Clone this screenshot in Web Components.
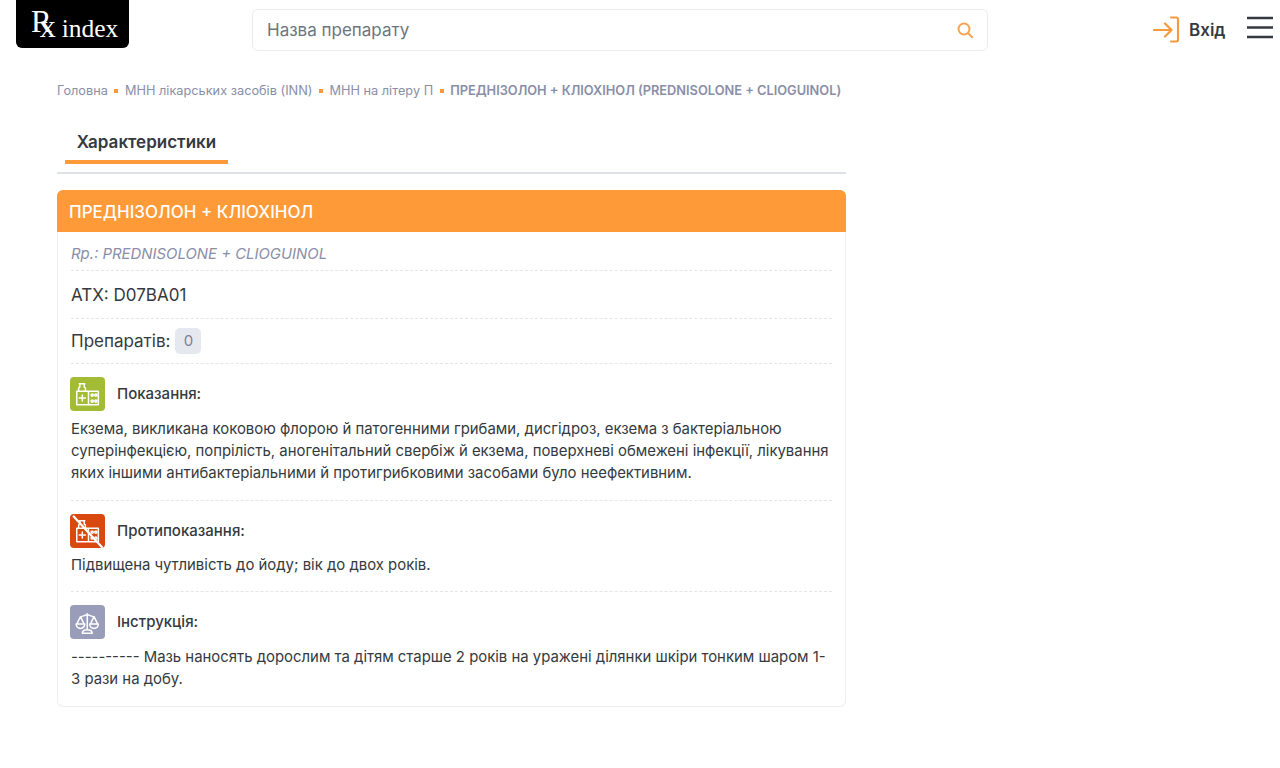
<!DOCTYPE html>
<html lang="uk">
<head>
<meta charset="utf-8">
<title>Rx index</title>
<style>
    html, body { margin: 0; background: #fff; }
    body { font-family: Inter, "Noto Sans", sans-serif; color: #212529; }
</style>
</head>
<body>
<site-header></site-header>
<page-content>
    <bread-crumbs></bread-crumbs>
    <tab-bar></tab-bar>
    <drug-card title-text="ПРЕДНІЗОЛОН + КЛІОХІНОЛ">
        <card-row kind="latin"><i>Rp.: PREDNISOLONE + CLIOGUINOL</i></card-row>
        <card-row kind="atc"><span>АТХ: D07BA01</span></card-row>
        <card-row kind="count"><span>Препаратів:</span> <count-badge>0</count-badge></card-row>
        <info-block label="Показання:" kind="ok">Екзема, викликана коковою флорою й патогенними грибами, дисгідроз, екзема з бактеріальною суперінфекцією, попрілість, аногенітальний свербіж й екзема, поверхневі обмежені інфекції, лікування яких іншими антибактеріальними й протигрибковими засобами було неефективним.</info-block>
        <info-block label="Протипоказання:" kind="no">Підвищена чутливість до йоду; вік до двох років.</info-block>
        <info-block label="Інструкція:" kind="law" last>---------- Мазь наносять дорослим та дітям старше 2 років на уражені ділянки шкіри тонким шаром 1-3 рази на добу.</info-block>
    </drug-card>
</page-content>

<script>
const kit = `<path d="M5.500 11.500h17.500v11H5.500zM7 11.500V9l1-1V5.500h3.500V8l1 1v2.500M7.500 5.500h4.500M15 11.500v11M7.500 17h5M10 14.500v5"/><circle cx="18" cy="14.700" r=".9"/><circle cx="21" cy="14.700" r=".9"/><circle cx="18" cy="19.500" r=".9"/><circle cx="21" cy="19.500" r=".9"/>`

const icons = {
    ok: { bg: '#a3bc36', svg: kit },
    no: { bg: '#d9480f', svg: kit + `<path stroke-width="1.800" d="M3 2l23 25"/>` },
    law: { bg: '#9a9db9', svg: `<path d="M14 7v13M8.500 9.500c2.500 0 3.500-1.500 5.500-1.500s3 1.500 5.500 1.500M8.500 9.500L5.500 15.500M8.500 9.500L11.500 15.500M19.500 9.500L16.500 15.500M19.500 9.500L22.500 15.500M5 15.500a3.500 3.500 0 0 0 7 0zM16 15.500a3.500 3.500 0 0 0 7 0zM10 23c0-2 1.500-3 4-3s4 1 4 3z"/>` }
}

window.customElements.define('site-header', class extends HTMLElement {
    constructor() {
        super()
        this.attachShadow({ mode: 'open' }).innerHTML = `
            <style>
                :host { display: flex; align-items: flex-start; height: 68px; }
                .logo {
                    display: flex; align-items: baseline;
                    width: 113px; height: 48px; margin-left: 16px; box-sizing: border-box;
                    background: #000; color: #fff; border-radius: 0 0 6px 6px;
                    font-family: "Liberation Serif", serif; white-space: nowrap;
                    padding: 4px 0 0 15px; line-height: 36px;
                }
                .rx { font-size: 32px; }
                .rx::first-letter { font-size: 31px; vertical-align: 5px; margin-right: -12px; }
                .name { font-size: 25.500px; margin-left: 6px; }
                .search {
                    width: 736px; height: 42px; margin: 9px 0 0 123px; box-sizing: border-box;
                    border: 1px solid #e9ecef; border-radius: 6px; padding: 0 13px 0 14px;
                    display: flex; align-items: center; justify-content: space-between;
                    color: #6c757d; font-size: 17px;
                }
                .login {
                    display: flex; align-items: center; margin: 16px 0 0 165px;
                    font-size: 17px; font-weight: 600; color: #343a40;
                }
                .login svg { margin-right: 9px; }
                .burger { margin: 16px 0 0 22px; }
            </style>
            <div class="logo"><div class="rx">Rx</div><div class="name">index</div></div>
            <div class="search">
                <span>Назва препарату</span>
                <svg width="18" height="18" viewBox="0 0 18 18" fill="none" stroke="#f7a351" stroke-width="2" stroke-linecap="round"><circle cx="8" cy="8" r="5.500"/><path d="M12.200 12.200l4 4"/></svg>
            </div>
            <div class="login">
                <svg width="27" height="27" viewBox="0 0 27 27" fill="none" stroke="#f79a3e" stroke-width="2.200" stroke-linecap="round" stroke-linejoin="round"><path d="M1 14h17M12 7.500l6.500 6.500-6.500 6.500M18 1.500h5.500a1.500 1.500 0 0 1 1.500 1.500v21a1.500 1.500 0 0 1-1.500 1.500h-5.500"/></svg>
                <span>Вхід</span>
            </div>
            <svg class="burger" width="26" height="23" viewBox="0 0 26 23" fill="none" stroke="#343a40" stroke-width="2.400"><path d="M0 2h26M0 11.500h26M0 21h26"/></svg>
        `
    }
})

window.customElements.define('page-content', class extends HTMLElement {
    constructor() {
        super()
        this.attachShadow({ mode: 'open' }).innerHTML = `
            <style>
                :host { display: block; width: 789px; margin-left: 57px; }
            </style>
            <slot></slot>
        `
    }
})

window.customElements.define('bread-crumbs', class extends HTMLElement {
    constructor() {
        super()
        this.attachShadow({ mode: 'open' }).innerHTML = `
            <style>
                :host {
                    display: flex; align-items: center; height: 44px; white-space: nowrap;
                    font-size: 12.750px; color: #8a8ea8; margin-bottom: 2px;
                }
                i { width: 4px; height: 4px; background: #f79a3e; margin: 2px 6.500px 0; }
                b { font-weight: 600; font-size: 12.800px; }
            </style>
            <span>Головна</span><i></i>
            <span>МНН лікарських засобів (INN)</span><i></i>
            <span>МНН на літеру П</span><i></i>
            <b>ПРЕДНІЗОЛОН + КЛІОХІНОЛ (PREDNISOLONE + CLIOGUINOL)</b>
        `
    }
})

window.customElements.define('tab-bar', class extends HTMLElement {
    constructor() {
        super()
        this.attachShadow({ mode: 'open' }).innerHTML = `
            <style>
                :host { display: block; border-bottom: 2px solid #dee2e6; height: 58px; margin-bottom: 16px; }
                div {
                    margin-left: 8px; width: 163px; height: 50px; box-sizing: border-box; padding-top: 17px;
                    border-bottom: 4px solid #ff9a39; text-align: center;
                    font-size: 17px; font-weight: 600; color: #343a40; line-height: 22px;
                }
            </style>
            <div>Характеристики</div>
        `
    }
})

window.customElements.define('drug-card', class extends HTMLElement {
    constructor() {
        super()
        this.attachShadow({ mode: 'open' }).innerHTML = `
            <style>
                :host { display: block; border-radius: 6px; box-shadow: 0 0 0 1px #eceef1 inset; }
                h2 {
                    margin: 0; height: 42px; padding: 0 12px; background: #ff9a39; color: #fff;
                    border-radius: 6px 6px 0 0; font-size: 17px; font-weight: 500; line-height: 44px;
                }
                .body { padding: 0 14px 1px; }
            </style>
            <h2>${this.getAttribute('title-text')}</h2>
            <div class="body"><slot></slot></div>
        `
    }
})

window.customElements.define('card-row', class extends HTMLElement {
    constructor() {
        super()
        const sizes = { latin: [38, 14.900, '#8a8ea8', 6], atc: [47, 17, '#343a40', 0], count: [44, 17, '#343a40', 0] }
        const [height, font, color, top] = sizes[this.getAttribute('kind')]
        this.attachShadow({ mode: 'open' }).innerHTML = `
            <style>
                :host { display: block; border-bottom: 1px dashed #e3e5ea; }
                .row {
                    display: flex; align-items: center; gap: 5px; box-sizing: border-box;
                    height: ${height}px; padding-top: ${top}px;
                    font-size: ${font}px; color: ${color};
                }
            </style>
            <div class="row"><slot></slot></div>
        `
    }
})

window.customElements.define('count-badge', class extends HTMLElement {
    constructor() {
        super()
        this.attachShadow({ mode: 'open' }).innerHTML = `
            <style>
                :host {
                    display: block; width: 26px; height: 26px; line-height: 26px; text-align: center;
                    background: #e6e8f0; color: #7b7f99; border-radius: 5px; font-size: 15px;
                }
            </style>
            <slot></slot>
        `
    }
})

window.customElements.define('info-block', class extends HTMLElement {
    constructor() {
        super()
        const icon = icons[this.getAttribute('kind')]
        this.attachShadow({ mode: 'open' }).innerHTML = `
            <style>
                :host {
                    display: block; padding: 12.500px 0 15px; border-bottom: 1px dashed #e3e5ea;
                    font-size: 14.900px; line-height: 22px; color: #343a40;
                }
                :host([kind="ok"]) { padding-bottom: 16px; }
                :host([last]) { border-bottom: 0; padding-bottom: 16px; }
                :host([kind="ok"]) .top, :host([last]) .top { margin-bottom: 7px; }
                .top { display: flex; align-items: center; gap: 12.500px; height: 34.500px; margin-bottom: 6px; font-size: 15px; font-weight: 500; }
                .ico { width: 34.500px; height: 34.500px; margin-left: -1px; border-radius: 4px; background: ${icon.bg}; display: block; flex: none; }
            </style>
            <div class="top">
                <svg class="ico" viewBox="0 0 28 28" fill="none" stroke="#fff" stroke-width="1.200" stroke-linecap="round" stroke-linejoin="round">${icon.svg}</svg>
                <span>${this.getAttribute('label')}</span>
            </div>
            <slot></slot>
        `
    }
})
</script>
</body>
</html>
